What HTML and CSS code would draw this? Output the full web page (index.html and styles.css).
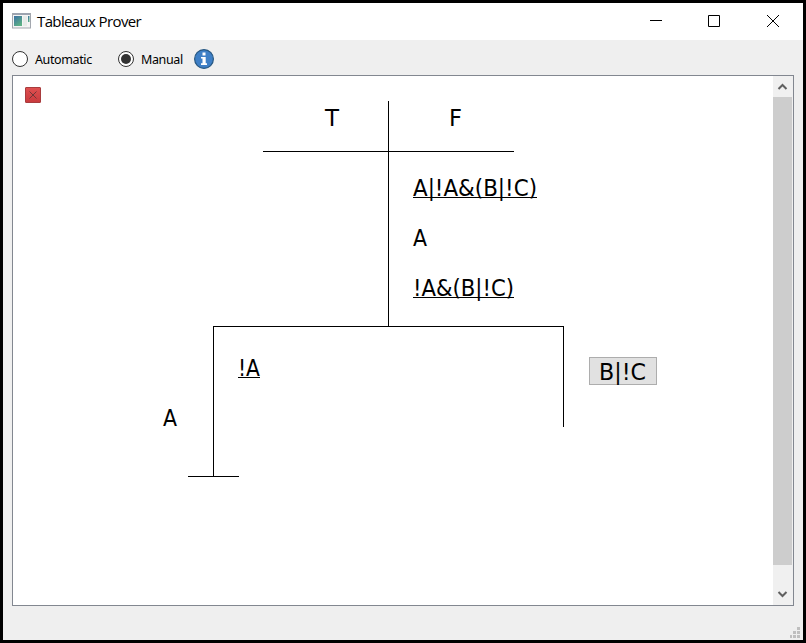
FILE: index.html
```html
<!DOCTYPE html>
<html lang="en">
<head>
<meta charset="utf-8">
<title>Tableaux Prover</title>
<link rel="stylesheet" href="styles.css">
</head>
<body>
<div class="window">
  <header class="titlebar">
    <svg class="app-icon" width="19" height="16" viewBox="0 0 19 16">
      <defs><linearGradient id="g" x1="0" y1="0" x2="0.6" y2="1"><stop offset="0" stop-color="#3c70a4"/><stop offset="1" stop-color="#5cb085"/></linearGradient></defs>
      <rect x=".5" y=".5" width="18" height="14.5" fill="#f4f4f4" stroke="#a3a7ae"/>
      <rect x="1" y="0" width="17" height="2" fill="#9da4b0"/>
      <rect x="2" y="3" width="8" height="10" fill="url(#g)"/>
      <rect x="11" y="3" width="4" height="10" fill="#e6ebe8"/>
      <rect x="16" y="3" width="1.5" height="6" fill="url(#g)"/>
    </svg>
    <h1 class="title">Tableaux Prover</h1>
    <svg class="controls" width="131" height="14" viewBox="0 0 131 14" fill="none" stroke="#000">
      <path d="M1 6.500H13M59.500 1.500H70.500V12.500H59.500ZM118 1L130 13M130 1L118 13"/>
    </svg>
  </header>
  <div class="toolbar">
    <label class="option"><span class="radio"></span><span class="auto">Automatic</span></label>
    <label class="option manual"><span class="radio checked"></span><span class="man">Manual</span></label>
    <svg class="info" width="20" height="20" viewBox="0 0 20 20">
      <circle cx="10" cy="10" r="9.400" fill="#3e7fc6" stroke="#285882" stroke-width="1.200"/>
      <path d="M8.500 3.500H11.500V6.500H8.500ZM7 8H11.700V14.200H13V16H7V14.200H8.500V9.600H7Z" fill="#fff"/>
    </svg>
  </div>
  <main class="panel">
    <svg class="tableau" width="760" height="529" viewBox="13 76 760 529">
      <defs><linearGradient id="r" x2="0" y2="1"><stop stop-color="#df5050"/><stop offset="1" stop-color="#c93a3d"/></linearGradient></defs>
      <rect x="25.500" y="87.500" width="15" height="15" rx=".5" fill="url(#r)" stroke="#a83c3e"/>
      <path d="M29.500 91.500L36.500 98.500M36.500 91.500L29.500 98.500" stroke="#713638" fill="none"/>
      <path class="branch" d="M388.500 101V326M263 151.500H514M213.500 476V326.500H563.500V427M188 476.500H239"/>
      <rect x="589.500" y="357.500" width="67" height="27" fill="#e1e1e1" stroke="#adadad"/>
      <g class="formula">
        <text x="325" y="126" textLength="14" lengthAdjust="spacingAndGlyphs">T</text>
        <text x="449" y="126" textLength="13" lengthAdjust="spacingAndGlyphs">F</text>
        <text x="413" y="196" textLength="124" lengthAdjust="spacingAndGlyphs">A|!A&amp;(B|!C)</text>
        <text x="413" y="246" textLength="14" lengthAdjust="spacingAndGlyphs">A</text>
        <text x="413" y="296" textLength="101" lengthAdjust="spacingAndGlyphs">!A&amp;(B|!C)</text>
        <text x="238" y="376" textLength="22" lengthAdjust="spacingAndGlyphs">!A</text>
        <text x="163" y="426" textLength="14" lengthAdjust="spacingAndGlyphs">A</text>
        <text x="599" y="380" textLength="47" lengthAdjust="spacingAndGlyphs">B|!C</text>
      </g>
      <path class="branch" d="M413 197.500H537M413 297.500H514M238 377.500H260"/>
    </svg>
    <div class="scrollbar">
      <svg class="arrow" width="20" height="21" viewBox="0 0 20 21"><path d="M5.500 13L9.500 9L13.500 13"/></svg>
      <div class="thumb"></div>
      <svg class="arrow down" width="20" height="21" viewBox="0 0 20 21"><path d="M5.500 8L9.500 12L13.500 8"/></svg>
    </div>
  </main>
  <footer class="status">
    <svg width="10" height="11" viewBox="0 0 10 11" fill="#bfbfbf"><path d="M7 0h3v3H7zM3 4h3v3H3zM7 4h3v3H7zM0 8h2v3H0zM3 8h3v3H3zM7 8h3v3H7z"/></svg>
  </footer>
</div>
</body>
</html>
```
FILE: styles.css
```css
* { box-sizing: border-box; }
body { margin: 0; background: #000; }
.window {
  width: 806px;
  height: 643px;
  border: 3px solid #000;
  background: #efefef;
  display: flex;
  flex-direction: column;
  color: #000;
}
.titlebar {
  height: 37px;
  background: #fff;
  display: flex;
  align-items: center;
  padding: 0 23px 0 9px;
}
.app-icon { margin-top: -1px; }
.title {
  margin: -2px auto 0 6px;
  font: 400 15px/20px "Open Sans", "Noto Sans", sans-serif;
  letter-spacing: -0.63px;
}
.controls { margin-top: -1px; }
.toolbar {
  height: 35px;
  display: flex;
  align-items: center;
  padding: 3px 9px 0;
  font: 12.5px/16px "Noto Sans", sans-serif;
}
.option { display: flex; align-items: center; gap: 7px; }
.manual { margin-left: 25px; }
.auto, .man { letter-spacing: -0.38px; white-space: nowrap; padding-top: 1px; }
.auto { width: 58px; }
.man { width: 42px; }
.radio {
  width: 16px;
  height: 16px;
  border: 1px solid #333;
  border-radius: 50%;
  background: #fff;
  display: grid;
  place-items: center;
}
.checked::after {
  content: "";
  width: 10px;
  height: 10px;
  border-radius: 50%;
  background: #333;
}
.info { margin-left: 11px; }
.panel {
  margin: 0 9px;
  height: 531px;
  border: 1px solid #828790;
  background: #fff;
  display: flex;
}
.tableau { flex: none; }
.branch { fill: none; stroke: #000; shape-rendering: crispEdges; }
.formula { font: 23px "DejaVu Sans Condensed", "DejaVu Sans", sans-serif; }
.scrollbar {
  width: 20px;
  background: #f0f0f0;
  display: flex;
  flex-direction: column;
}
.thumb { width: 19px; height: 468px; background: #cdcdcd; }
.arrow { fill: none; stroke: #606060; stroke-width: 2; }
.down { margin-top: 19px; }
.status {
  flex: 1;
  display: flex;
  justify-content: flex-end;
  align-items: flex-end;
  padding: 0 3px 2px;
}
```
